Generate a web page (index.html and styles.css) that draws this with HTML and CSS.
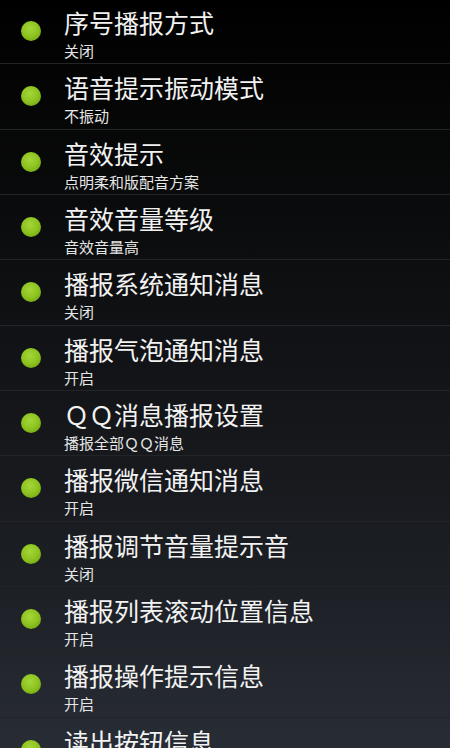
FILE: index.html
```html
<!DOCTYPE html>
<html lang="zh-CN">
<head>
    <meta charset="UTF-8">
    <meta name="viewport" content="width=device-width, initial-scale=1.0">
    <title>语音设置</title>
    <link rel="stylesheet" href="styles.css">
</head>
<body>
    <main>
        <ul class="settings">
            <li class="item">
                <span class="dot"></span>
                <div class="text">
                    <div class="title">序号播报方式</div>
                    <div class="summary">关闭</div>
                </div>
            </li>
            <li class="item">
                <span class="dot"></span>
                <div class="text">
                    <div class="title">语音提示振动模式</div>
                    <div class="summary">不振动</div>
                </div>
            </li>
            <li class="item">
                <span class="dot"></span>
                <div class="text">
                    <div class="title">音效提示</div>
                    <div class="summary">点明柔和版配音方案</div>
                </div>
            </li>
            <li class="item">
                <span class="dot"></span>
                <div class="text">
                    <div class="title">音效音量等级</div>
                    <div class="summary">音效音量高</div>
                </div>
            </li>
            <li class="item">
                <span class="dot"></span>
                <div class="text">
                    <div class="title">播报系统通知消息</div>
                    <div class="summary">关闭</div>
                </div>
            </li>
            <li class="item">
                <span class="dot"></span>
                <div class="text">
                    <div class="title">播报气泡通知消息</div>
                    <div class="summary">开启</div>
                </div>
            </li>
            <li class="item">
                <span class="dot"></span>
                <div class="text">
                    <div class="title">ＱＱ消息播报设置</div>
                    <div class="summary">播报全部ＱＱ消息</div>
                </div>
            </li>
            <li class="item">
                <span class="dot"></span>
                <div class="text">
                    <div class="title">播报微信通知消息</div>
                    <div class="summary">开启</div>
                </div>
            </li>
            <li class="item">
                <span class="dot"></span>
                <div class="text">
                    <div class="title">播报调节音量提示音</div>
                    <div class="summary">关闭</div>
                </div>
            </li>
            <li class="item">
                <span class="dot"></span>
                <div class="text">
                    <div class="title">播报列表滚动位置信息</div>
                    <div class="summary">开启</div>
                </div>
            </li>
            <li class="item">
                <span class="dot"></span>
                <div class="text">
                    <div class="title">播报操作提示信息</div>
                    <div class="summary">开启</div>
                </div>
            </li>
            <li class="item">
                <span class="dot"></span>
                <div class="text">
                    <div class="title">读出按钮信息</div>
                    <div class="summary">开启</div>
                </div>
            </li>
        </ul>
    </main>
</body>
</html>
```

FILE: styles.css
```css
:root {
    --row-height: 65.33px;
    --divider: #222428;
}
* {
    box-sizing: border-box;
}
html, body {
    margin: 0;
    padding: 0;
    width: 100%;
    height: 100%;
    overflow: hidden;
    font-family: "Noto Sans CJK SC", "Noto Sans", sans-serif;
    color: #f2f2f2;
}
body {
    background: linear-gradient(#000 0%, #0b0c0d 30%, #111215 45%, #1b1e23 75%, #282c35 100%);
}

.settings {
    list-style: none;
    margin: -1px 0 0;
    padding: 0;
}
.item {
    display: flex;
    align-items: center;
    height: var(--row-height);
    padding-left: 21px;
    border-bottom: 1px solid var(--divider);
}
.dot {
    flex: none;
    width: 20px;
    height: 20px;
    border-radius: 50%;
    background: radial-gradient(circle at 45% 38%, #a4d63a 0%, #8dc31f 50%, #76a916 80%, #527d0c 100%);
}
.text {
    align-self: flex-start;
    margin-left: 23px;
    padding-top: 8px;
}
.title {
    font-size: 25px;
    line-height: 30px;
    white-space: nowrap;
}
.summary {
    margin-top: 5px;
    font-size: 15px;
    line-height: 18px;
    color: #e6e6e6;
}
```
